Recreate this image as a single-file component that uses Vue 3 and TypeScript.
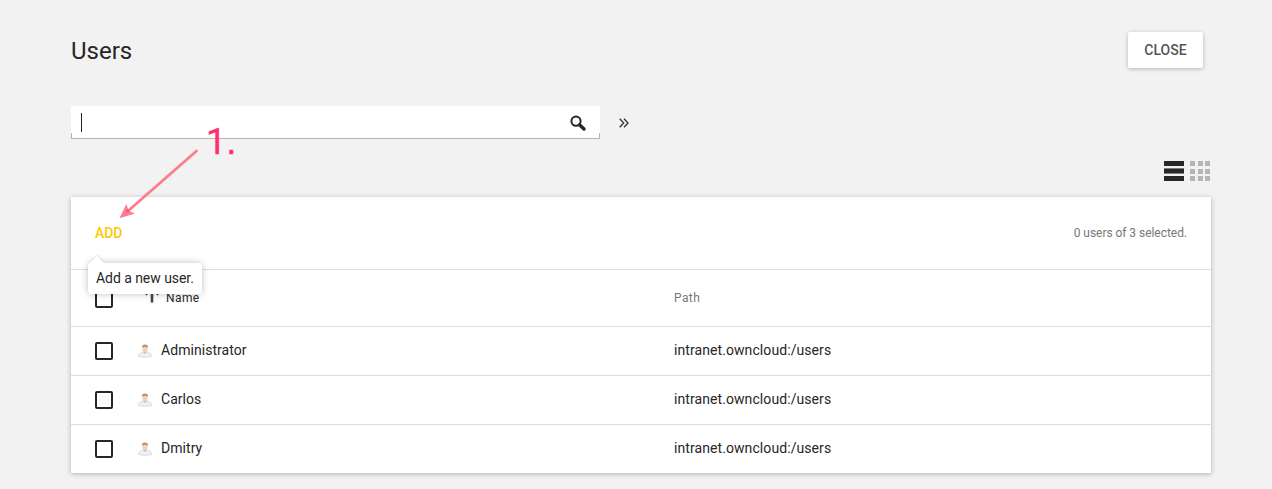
<script setup lang="ts">
interface User {
  name: string
  path: string
}

const users: User[] = [
  { name: 'Administrator', path: 'intranet.owncloud:/users' },
  { name: 'Carlos', path: 'intranet.owncloud:/users' },
  { name: 'Dmitry', path: 'intranet.owncloud:/users' },
]
const dots = [0, 1, 2, 3, 4, 5, 6, 7, 8]
</script>

<template>
  <main class="page">
    <header class="top">
      <h1>Users</h1>
      <button class="close" type="button">CLOSE</button>
    </header>

    <div class="search-row">
      <div class="search">
        <span class="caret"></span>
        <svg class="lens" width="17" height="17" viewBox="0 0 17 17">
          <circle cx="6" cy="6.2" r="4.6" fill="none" stroke="#262626" stroke-width="2" />
          <path d="M9.5 9.7L14 14" stroke="#262626" stroke-width="3.4" stroke-linecap="round" />
        </svg>
      </div>
      <svg class="more" width="10" height="10" viewBox="0 0 10 10">
        <path d="M.7 .7L4.7 5L.7 9.3M5 .7L9 5L5 9.3" fill="none" stroke="#333" stroke-width="1.3" />
      </svg>
    </div>

    <div class="views">
      <div class="list-view"><i></i><i></i><i></i></div>
      <div class="grid-view"><i v-for="d in dots" :key="d"></i></div>
    </div>

    <section class="card">
      <div class="toolbar">
        <div class="add">
          ADD
          <div class="tooltip">Add a new user.</div>
        </div>
        <span class="count">0 users of 3 selected.</span>
      </div>
      <div class="row head">
        <span class="box"></span>
        <svg class="sort" width="14" height="14" viewBox="0 0 14 14">
          <path d="M7 13.5V2" stroke="#444" stroke-width="2.6" />
          <path d="M.8 5.8L6.2 .4M13.2 5.8L7.8 .4" fill="none" stroke="#444" stroke-width="2" />
        </svg>
        <span class="name">Name</span>
        <span class="path">Path</span>
      </div>
      <div v-for="user in users" :key="user.name" class="row">
        <span class="box"></span>
        <svg class="avatar" width="14" height="14" viewBox="0 0 14 14">
          <path d="M.4 12.6C.4 9.6 2.3 8.7 5 8.1L7 9.2L9 8.1C11.7 8.7 13.6 9.6 13.6 12.6Q7 14.2 .4 12.6Z" fill="#eeeff7" stroke="#cdcede" stroke-width=".6" />
          <path d="M5.4 6.5H8.6V8.4L7 9.8L5.4 8.4Z" fill="#e5b894" />
          <ellipse cx="7" cy="4.7" rx="2.6" ry="3.3" fill="#f3d1b2" />
          <path d="M4 4.6C3.5 1.7 4.7.6 7 .6S10.5 1.7 10 4.6L9.2 2.9Q7 3.3 4.8 2.9Z" fill="#b99474" />
        </svg>
        <span class="name">{{ user.name }}</span>
        <span class="path">{{ user.path }}</span>
      </div>
    </section>

    <div class="note">1<span class="stop">.</span></div>
    <svg class="arrow" width="84" height="74" viewBox="0 0 84 74">
      <path d="M80.5 5L12 65" stroke="#ff7b8d" stroke-width="2.8" stroke-linecap="round" />
      <path d="M3.5 72.2L10.4 58L12.6 64.8L19 67.4Z" fill="#ff7b8d" />
      <circle cx="11.8" cy="65" r="1.2" fill="#ff4964" />
    </svg>
  </main>
</template>

<style>
body {
  margin: 0;
  background: #f2f2f2;
}
</style>

<style scoped>
.page {
  position: relative;
  box-sizing: border-box;
  width: 1272px;
  height: 489px;
  padding: 32px 61px 0 71px;
  overflow: hidden;
  background: #f2f2f2;
  color: #262626;
  font-family: Roboto, sans-serif;
  font-size: 14px;
}
.top {
  display: flex;
  justify-content: space-between;
  height: 36px;
  padding-right: 8px;
}
h1 {
  margin: 0;
  font-size: 24px;
  font-weight: 400;
  line-height: 38px;
}
.close {
  width: 75px;
  height: 36px;
  padding: 0;
  border: 0;
  border-radius: 2px;
  background: #fff;
  box-shadow: 0 1px 4px rgba(0, 0, 0, 0.25);
  color: #555;
  font: 500 14px Roboto, sans-serif;
}
.search-row {
  display: flex;
  align-items: center;
  gap: 19px;
  height: 33px;
  margin-top: 38px;
}
.search {
  display: flex;
  align-items: center;
  justify-content: space-between;
  box-sizing: border-box;
  width: 529px;
  height: 33px;
  padding: 0 13px 0 10px;
  background:
    linear-gradient(#b3b3b3, #b3b3b3) left bottom / 1px 6px no-repeat,
    linear-gradient(#b3b3b3, #b3b3b3) right bottom / 1px 6px no-repeat,
    linear-gradient(#b3b3b3, #b3b3b3) left bottom / 100% 1px no-repeat,
    #fff;
}
.caret {
  width: 1px;
  height: 19px;
  background: #222;
}
.lens {
  margin-top: 1px;
}
.more {
  margin-top: 1px;
  margin-left: -0.5px;
}
.views {
  display: flex;
  justify-content: flex-end;
  gap: 6px;
  height: 20px;
  margin: 22px 1px 16px 0;
}
.list-view {
  display: flex;
  flex-direction: column;
  justify-content: space-between;
  width: 20px;
}
.list-view i {
  height: 5px;
  background: #262626;
}
.list-view i:nth-child(2) {
  height: 6px;
  background: linear-gradient(#808080 1px, #262626 1px, #262626 5px, #808080 5px);
}
.grid-view {
  display: grid;
  grid-template-columns: repeat(3, 5px);
  grid-template-rows: repeat(3, 5px);
  gap: 2.5px;
}
.grid-view i {
  background: #b5b5b5;
}
.card {
  height: 276px;
  background: #fff;
  box-shadow: 0 1px 5px rgba(0, 0, 0, 0.27);
}
.toolbar {
  display: flex;
  align-items: center;
  justify-content: space-between;
  box-sizing: border-box;
  height: 73px;
  padding: 0 24px;
  border-bottom: 1px solid #dedede;
}
.add {
  position: relative;
  color: #fbca04;
  font-weight: 500;
  letter-spacing: -0.1px;
}
.count {
  color: #777;
  font-size: 12px;
  letter-spacing: -0.04px;
}
.tooltip {
  position: absolute;
  z-index: 1;
  top: 38px;
  left: -7px;
  box-sizing: border-box;
  width: 114px;
  height: 31px;
  padding-left: 8px;
  border-radius: 3px;
  background: #fff;
  box-shadow: 0 0 7px rgba(0, 0, 0, 0.25);
  color: #262626;
  font-weight: 400;
  letter-spacing: -0.05px;
  line-height: 30px;
  white-space: nowrap;
}
.tooltip::before {
  position: absolute;
  top: -7px;
  left: 1px;
  width: 16px;
  height: 8px;
  background: #fff;
  clip-path: polygon(50% 0, 100% 100%, 0 100%);
  content: '';
}
.tooltip::after {
  position: absolute;
  z-index: -1;
  top: -5px;
  left: 4px;
  width: 10px;
  height: 10px;
  box-shadow: -1px -1px 2px rgba(0, 0, 0, 0.12);
  transform: rotate(45deg);
  content: '';
}
.row {
  display: grid;
  grid-template-columns: 43px 23px 513px 1fr;
  align-items: center;
  box-sizing: border-box;
  height: 49px;
  padding: 0 0 2px 24px;
  border-bottom: 1px solid #dedede;
}
.row:last-child {
  border-bottom-color: transparent;
}
.row .name,
.row .path {
  line-height: 16px;
  margin-top: -1px;
}
.row .path {
  letter-spacing: 0.08px;
}
.row .name {
  letter-spacing: 0.05px;
}
.row.head {
  grid-template-columns: 50px 21px 508px 1fr;
  height: 57px;
  padding-bottom: 0;
  font-size: 12px;
}
.row.head .name {
  letter-spacing: 0.4px;
}
.row.head .path {
  color: #777;
  letter-spacing: 0.4px;
}
.sort {
  margin-top: -4px;
}
.avatar {
  margin-top: 1px;
}
.box {
  box-sizing: border-box;
  width: 18px;
  height: 18px;
  margin-top: 1px;
  border: 2px solid #262626;
  border-radius: 2px;
}
.note {
  position: absolute;
  top: 121px;
  left: 206px;
  color: #ff2f6d;
  font-size: 36px;
  line-height: 42px;
  -webkit-text-stroke: 0.4px #ff2f6d;
}
.stop {
  font-family: 'Liberation Sans', sans-serif;
}
.arrow {
  position: absolute;
  top: 146px;
  left: 116px;
}
</style>
